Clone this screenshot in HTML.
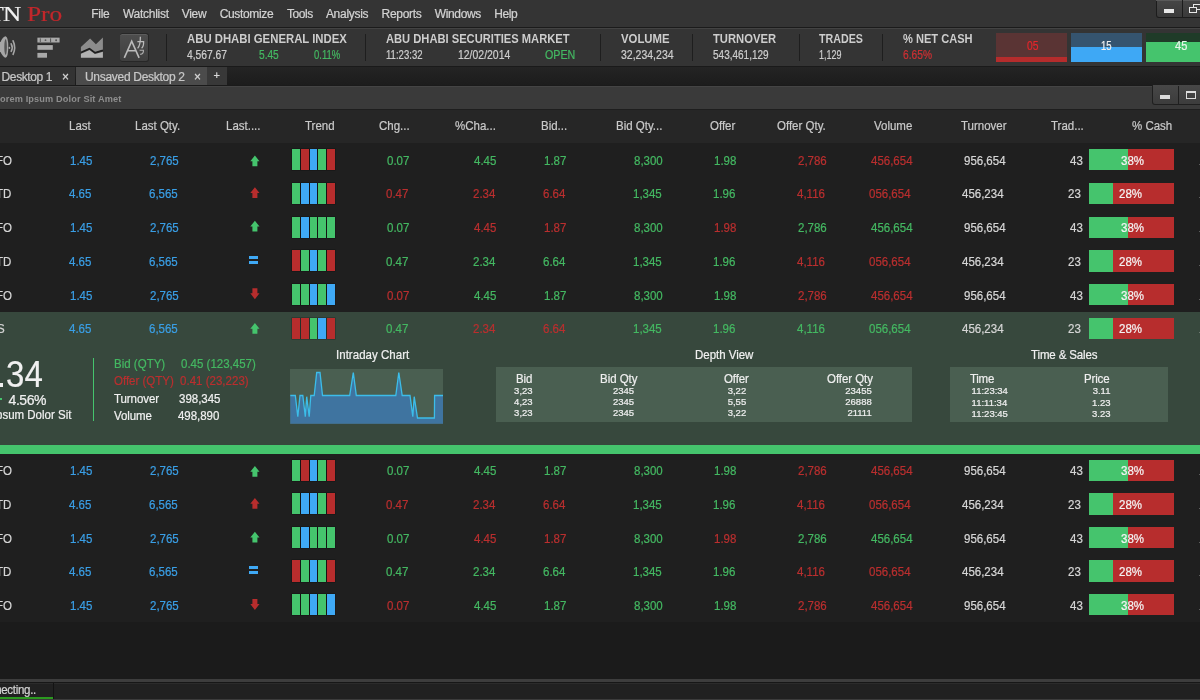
<!DOCTYPE html>
<html><head><meta charset="utf-8"><style>
*{margin:0;padding:0;box-sizing:border-box}
html,body{width:1200px;height:700px;overflow:hidden;background:#1b1b1b;position:relative}
.a{position:absolute}
.t{position:absolute;white-space:nowrap;-webkit-text-stroke:0.22px currentColor}
</style></head><body>
<div id="root" style="position:absolute;left:0;top:0;width:1200px;height:700px;overflow:hidden;background:#1b1b1b;will-change:transform">
<div class="a" style="left:0.00px;top:0.00px;width:1200.00px;height:27.00px;background:#343434;"></div>
<div class="a" style="left:0.00px;top:27.00px;width:1200.00px;height:1.00px;background:#1b1b1b;"></div>
<div class="a" style="left:0.00px;top:28.00px;width:1200.00px;height:1.00px;background:#434343;"></div>
<div class="a" style="left:0.00px;top:29.00px;width:1200.00px;height:37.00px;background:#343434;"></div>
<div class="a" style="left:0.00px;top:66.00px;width:1200.00px;height:1.00px;background:#1a1a1a;"></div>
<div class="t" style="left:-9.80px;top:-0.92px;font-size:22px;line-height:29px;letter-spacing:0.000px;color:#f0f0f0;font-family:'Liberation Serif',serif;">T</div>
<div class="t" style="left:3.40px;top:-0.92px;font-size:22px;line-height:29px;letter-spacing:0.000px;color:#f0f0f0;font-family:'Liberation Serif',serif;transform-origin:0 0;transform:scaleX(1.1447);">N</div>
<div class="t" style="left:26.70px;top:-0.92px;font-size:22px;line-height:29px;letter-spacing:0.000px;color:#c0272b;font-family:'Liberation Serif',serif;transform-origin:0 0;transform:scaleX(1.1536);">Pro</div>
<div class="t" style="left:91.30px;top:5.84px;font-size:12px;line-height:16px;letter-spacing:-0.300px;color:#d2d2d2;font-family:'Liberation Sans',sans-serif;">File</div>
<div class="t" style="left:123.00px;top:5.84px;font-size:12px;line-height:16px;letter-spacing:-0.275px;color:#d2d2d2;font-family:'Liberation Sans',sans-serif;">Watchlist</div>
<div class="t" style="left:181.70px;top:5.84px;font-size:12px;line-height:16px;letter-spacing:-0.267px;color:#d2d2d2;font-family:'Liberation Sans',sans-serif;">View</div>
<div class="t" style="left:219.70px;top:5.84px;font-size:12px;line-height:16px;letter-spacing:-0.338px;color:#d2d2d2;font-family:'Liberation Sans',sans-serif;">Customize</div>
<div class="t" style="left:286.90px;top:5.84px;font-size:12px;line-height:16px;letter-spacing:-0.400px;color:#d2d2d2;font-family:'Liberation Sans',sans-serif;">Tools</div>
<div class="t" style="left:325.90px;top:5.84px;font-size:12px;line-height:16px;letter-spacing:-0.286px;color:#d2d2d2;font-family:'Liberation Sans',sans-serif;">Analysis</div>
<div class="t" style="left:381.60px;top:5.84px;font-size:12px;line-height:16px;letter-spacing:-0.317px;color:#d2d2d2;font-family:'Liberation Sans',sans-serif;">Reports</div>
<div class="t" style="left:434.70px;top:5.84px;font-size:12px;line-height:16px;letter-spacing:-0.350px;color:#d2d2d2;font-family:'Liberation Sans',sans-serif;">Windows</div>
<div class="t" style="left:494.30px;top:5.84px;font-size:12px;line-height:16px;letter-spacing:-0.433px;color:#d2d2d2;font-family:'Liberation Sans',sans-serif;">Help</div>
<div class="a" style="left:1155.5px;top:-1px;width:50px;height:19px;border:1px solid #1c1c1c;border-top:none;border-radius:0 0 0 3px;background:linear-gradient(#474747,#3a3a3a)"></div>
<div class="a" style="left:1155.50px;top:0.00px;width:50.00px;height:1.00px;background:#5a5a5a;"></div>
<div class="a" style="left:1182.00px;top:0.00px;width:1.00px;height:17.50px;background:#1c1c1c;"></div>
<div class="a" style="left:1164.30px;top:9.30px;width:9.70px;height:3.40px;background:#e8e8e8;"></div>
<div class="a" style="left:1192.7px;top:3.8px;width:9px;height:6.5px;border:1.6px solid #e8e8e8"></div>
<div class="a" style="left:1189.3px;top:6.8px;width:7.9px;height:6.6px;border:1.6px solid #e8e8e8;background:#3f3f3f"></div>
<svg class="a" style="left:0;top:32px" width="20" height="30" viewBox="0 32 20 30">
<path d="M-4 42 L0.5 42 Q3 36.6 5.6 36.3 Q8.3 37 8.3 47 Q8.3 57 5.6 57.7 Q3 57.3 0.5 52 L-4 52 Z" fill="#a6a6a6"/>
<path d="M5.6 39 Q6.9 40.5 6.9 47 Q6.9 53.5 5.6 55 Q4.3 53.5 4.3 47 Q4.3 40.5 5.6 39Z" fill="#3a3a3a" opacity="0.75"/>
<ellipse cx="9.4" cy="47.9" rx="0.9" ry="1.1" fill="#a6a6a6"/>
<path d="M11.2 43.8 Q13.2 47.5 11.2 51.3" stroke="#a6a6a6" stroke-width="1.6" fill="none" stroke-linecap="round"/>
<path d="M13.1 40.8 Q16.2 47.5 13.1 54.3" stroke="#a6a6a6" stroke-width="1.6" fill="none" stroke-linecap="round"/>
</svg>
<svg class="a" style="left:36px;top:36px" width="26" height="23" viewBox="36 36 26 23">
<rect x="37.4" y="36.7" width="22.2" height="1" fill="#242424"/>
<rect x="37.4" y="37.6" width="22.2" height="4.9" fill="#a9a9a9"/>
<rect x="39.8" y="38.4" width="1" height="3.6" fill="#5a5a5a"/><circle cx="45.5" cy="40.2" r="0.9" fill="#5a5a5a"/>
<rect x="50" y="38.4" width="1.1" height="4.2" fill="#5a5a5a"/><circle cx="56.1" cy="40.2" r="1" fill="#555"/>
<rect x="37.4" y="44.2" width="15.4" height="1" fill="#242424"/>
<rect x="37.4" y="45.1" width="15.4" height="4.7" fill="#a9a9a9"/>
<rect x="37.4" y="51.9" width="9.6" height="1" fill="#242424"/>
<rect x="37.4" y="52.8" width="9.6" height="4.9" fill="#a9a9a9"/>
</svg>
<svg class="a" style="left:78px;top:35px" width="28" height="25" viewBox="78 35 28 25">
<path d="M80.9 47 L90.1 38.4 L95.9 44.2 L102.9 37.6 L102.9 50 L94.9 52.4 L89.5 48.3 L80.9 52.2 Z" fill="#8c8c8c"/>
<path d="M80.9 52.4 L89.5 48.5 L94.9 52.6 L102.9 50.2" stroke="#1e1e1e" stroke-width="1.5" fill="none"/>
<path d="M80.9 53.8 L89.5 50 L94.9 54 L102.9 51.7 L102.9 57.7 L80.9 57.7 Z" fill="#b2b2b2"/>
</svg>
<div class="a" style="left:119.5px;top:33px;width:29px;height:29px;border-radius:3px;background:#272727"></div>
<div class="a" style="left:120.2px;top:33.7px;width:27.7px;height:27.7px;border-radius:2.5px;background:linear-gradient(#4d4d4d,#3f3f3f);border-top:1px solid #5c5c5c"></div>
<svg class="a" style="left:116px;top:30px" width="36" height="36" viewBox="116 30 36 36">
<path d="M124.3 57.8 L131.7 41.2 L139.1 57.8 M127.3 50.8 L136.1 50.8" stroke="#bababa" stroke-width="1.6" fill="none"/>
<path d="M137.4 41.6 L143.6 41.6 Q143.8 46.5 141.6 48.2 M140.4 36.8 Q140.4 45.5 137.6 48.4" stroke="#bababa" stroke-width="1.3" fill="none"/>
<path d="M139.6 50.2 L143.4 50.2 Q143.8 53.8 140.2 54.4" stroke="#b0b0b0" stroke-width="1.1" fill="none"/>
</svg>
<div class="a" style="left:166.20px;top:34.20px;width:1.20px;height:26.80px;background:#1e1e1e;"></div>
<div class="a" style="left:365.10px;top:34.20px;width:1.20px;height:26.80px;background:#1e1e1e;"></div>
<div class="a" style="left:599.70px;top:34.20px;width:1.20px;height:26.80px;background:#1e1e1e;"></div>
<div class="a" style="left:692.20px;top:34.20px;width:1.20px;height:26.80px;background:#1e1e1e;"></div>
<div class="a" style="left:798.80px;top:34.20px;width:1.20px;height:26.80px;background:#1e1e1e;"></div>
<div class="a" style="left:882.20px;top:34.20px;width:1.20px;height:26.80px;background:#1e1e1e;"></div>
<div class="t" style="left:187.00px;top:30.87px;font-size:12.5px;line-height:16px;letter-spacing:0.000px;color:#cdcdcd;font-family:'Liberation Sans',sans-serif;font-weight:bold;-webkit-text-stroke:0;transform-origin:0 0;transform:scaleX(0.9075);">ABU DHABI GENERAL INDEX</div>
<div class="t" style="left:187.00px;top:46.84px;font-size:12px;line-height:16px;letter-spacing:0.000px;color:#cdcdcd;font-family:'Liberation Sans',sans-serif;transform-origin:0 0;transform:scaleX(0.8565);">4,567.67</div>
<div class="t" style="left:259.40px;top:46.84px;font-size:12px;line-height:16px;letter-spacing:0.000px;color:#44b862;font-family:'Liberation Sans',sans-serif;transform-origin:0 0;transform:scaleX(0.8462);">5.45</div>
<div class="t" style="left:314.00px;top:46.84px;font-size:12px;line-height:16px;letter-spacing:0.000px;color:#44b862;font-family:'Liberation Sans',sans-serif;transform-origin:0 0;transform:scaleX(0.7915);">0.11%</div>
<div class="t" style="left:386.00px;top:30.87px;font-size:12.5px;line-height:16px;letter-spacing:0.000px;color:#cdcdcd;font-family:'Liberation Sans',sans-serif;font-weight:bold;-webkit-text-stroke:0;transform-origin:0 0;transform:scaleX(0.8930);">ABU DHABI SECURITIES MARKET</div>
<div class="t" style="left:386.00px;top:46.84px;font-size:12px;line-height:16px;letter-spacing:0.000px;color:#cdcdcd;font-family:'Liberation Sans',sans-serif;transform-origin:0 0;transform:scaleX(0.7969);">11:23:32</div>
<div class="t" style="left:457.90px;top:46.84px;font-size:12px;line-height:16px;letter-spacing:0.000px;color:#cdcdcd;font-family:'Liberation Sans',sans-serif;transform-origin:0 0;transform:scaleX(0.8702);">12/02/2014</div>
<div class="t" style="left:545.00px;top:46.84px;font-size:12px;line-height:16px;letter-spacing:0.000px;color:#44b862;font-family:'Liberation Sans',sans-serif;transform-origin:0 0;transform:scaleX(0.8882);">OPEN</div>
<div class="t" style="left:620.70px;top:30.87px;font-size:12.5px;line-height:16px;letter-spacing:0.000px;color:#cdcdcd;font-family:'Liberation Sans',sans-serif;font-weight:bold;-webkit-text-stroke:0;transform-origin:0 0;transform:scaleX(0.9084);">VOLUME</div>
<div class="t" style="left:620.70px;top:46.84px;font-size:12px;line-height:16px;letter-spacing:0.000px;color:#cdcdcd;font-family:'Liberation Sans',sans-serif;transform-origin:0 0;transform:scaleX(0.8752);">32,234,234</div>
<div class="t" style="left:712.70px;top:30.87px;font-size:12.5px;line-height:16px;letter-spacing:0.000px;color:#cdcdcd;font-family:'Liberation Sans',sans-serif;font-weight:bold;-webkit-text-stroke:0;transform-origin:0 0;transform:scaleX(0.8987);">TURNOVER</div>
<div class="t" style="left:712.70px;top:46.84px;font-size:12px;line-height:16px;letter-spacing:0.000px;color:#cdcdcd;font-family:'Liberation Sans',sans-serif;transform-origin:0 0;transform:scaleX(0.8336);">543,461,129</div>
<div class="t" style="left:819.30px;top:30.87px;font-size:12.5px;line-height:16px;letter-spacing:0.000px;color:#cdcdcd;font-family:'Liberation Sans',sans-serif;font-weight:bold;-webkit-text-stroke:0;transform-origin:0 0;transform:scaleX(0.8560);">TRADES</div>
<div class="t" style="left:819.30px;top:46.84px;font-size:12px;line-height:16px;letter-spacing:0.000px;color:#cdcdcd;font-family:'Liberation Sans',sans-serif;transform-origin:0 0;transform:scaleX(0.7467);">1,129</div>
<div class="t" style="left:902.70px;top:30.87px;font-size:12.5px;line-height:16px;letter-spacing:0.000px;color:#cdcdcd;font-family:'Liberation Sans',sans-serif;font-weight:bold;-webkit-text-stroke:0;transform-origin:0 0;transform:scaleX(0.8866);">% NET CASH</div>
<div class="t" style="left:902.70px;top:46.84px;font-size:12px;line-height:16px;letter-spacing:0.000px;color:#cc3033;font-family:'Liberation Sans',sans-serif;transform-origin:0 0;transform:scaleX(0.8529);">6.65%</div>
<div class="a" style="left:996.00px;top:32.70px;width:71.20px;height:23.90px;background:#5a3434;"></div>
<div class="a" style="left:996.00px;top:56.60px;width:71.20px;height:5.60px;background:#b52c2c;"></div>
<div class="a" style="left:1071.20px;top:32.70px;width:71.20px;height:14.30px;background:#35546f;"></div>
<div class="a" style="left:1071.20px;top:47.00px;width:71.20px;height:15.20px;background:#3ea8f5;"></div>
<div class="a" style="left:1146.00px;top:32.70px;width:60.00px;height:9.40px;background:#1f3b28;"></div>
<div class="a" style="left:1146.00px;top:42.10px;width:60.00px;height:20.10px;background:#45c46d;"></div>
<div class="t" style="left:1026.80px;top:38.37px;font-size:12.5px;line-height:16px;letter-spacing:0.000px;color:#e3262b;font-family:'Liberation Sans',sans-serif;transform-origin:0 0;transform:scaleX(0.8273);">05</div>
<div class="t" style="left:1101.00px;top:38.37px;font-size:12.5px;line-height:16px;letter-spacing:0.000px;color:#f0f0f0;font-family:'Liberation Sans',sans-serif;transform-origin:0 0;transform:scaleX(0.7626);">15</div>
<div class="t" style="left:1175.40px;top:38.37px;font-size:12.5px;line-height:16px;letter-spacing:0.000px;color:#e8f5ea;font-family:'Liberation Sans',sans-serif;transform-origin:0 0;transform:scaleX(0.8849);">45</div>
<div class="a" style="left:0.00px;top:67.00px;width:1200.00px;height:18.00px;background:linear-gradient(#242424,#1c1c1c);"></div>
<div class="a" style="left:0.00px;top:67.00px;width:75.00px;height:18.00px;background:#333333;"></div>
<div class="a" style="left:76.00px;top:67.00px;width:130.60px;height:18.00px;background:#4b4b4b;"></div>
<div class="a" style="left:207.00px;top:67.00px;width:20.00px;height:18.00px;background:#383838;"></div>
<div class="t" style="left:1.60px;top:68.54px;font-size:12px;line-height:16px;letter-spacing:-0.400px;color:#c8c8c8;font-family:'Liberation Sans',sans-serif;">Desktop 1</div>
<div class="t" style="left:85.00px;top:68.54px;font-size:12px;line-height:16px;letter-spacing:-0.294px;color:#c8c8c8;font-family:'Liberation Sans',sans-serif;">Unsaved Desktop 2</div>
<div class="t" style="left:62.00px;top:69.34px;font-size:12px;line-height:16px;letter-spacing:0.000px;color:#d8d8d8;font-family:'Liberation Sans',sans-serif;">×</div>
<div class="t" style="left:194.00px;top:69.34px;font-size:12px;line-height:16px;letter-spacing:0.000px;color:#d8d8d8;font-family:'Liberation Sans',sans-serif;">×</div>
<div class="t" style="left:213.60px;top:68.19px;font-size:11px;line-height:14px;letter-spacing:0.000px;color:#d8d8d8;font-family:'Liberation Sans',sans-serif;">+</div>
<div class="a" style="left:0.00px;top:85.00px;width:1200.00px;height:1.00px;background:#1a1a1a;"></div>
<div class="a" style="left:0.00px;top:86.00px;width:1200.00px;height:22.80px;background:#3a3a3a;"></div>
<div class="a" style="left:0.00px;top:86.00px;width:1200.00px;height:1.00px;background:#444444;"></div>
<div class="t" style="left:0.00px;top:92.81px;font-size:9.2px;line-height:12px;letter-spacing:0.133px;color:#8e8e8e;font-family:'Liberation Sans',sans-serif;font-weight:bold;-webkit-text-stroke:0;">orem Ipsum Dolor Sit Amet</div>
<div class="a" style="left:1151.7px;top:85px;width:60px;height:20.3px;border:1px solid #1f1f1f;border-top:none;border-radius:0 0 0 3px;background:linear-gradient(#474747,#3c3c3c)"></div>
<div class="a" style="left:1178.00px;top:86.00px;width:1.20px;height:18.00px;background:#1f1f1f;"></div>
<div class="a" style="left:1160.30px;top:95.30px;width:9.70px;height:3.70px;background:#dcdcdc;"></div>
<div class="a" style="left:1186px;top:91px;width:10px;height:8px;border:1.6px solid #dcdcdc;border-top-width:2.4px"></div>
<div class="a" style="left:0.00px;top:108.80px;width:1200.00px;height:1.40px;background:#1e1e1e;"></div>
<div class="a" style="left:0.00px;top:110.00px;width:1200.00px;height:33.00px;background:#262626;"></div>
<div class="t" style="left:68.80px;top:117.63px;font-size:12.6px;line-height:16px;letter-spacing:0.000px;color:#c9c9c9;font-family:'Liberation Sans',sans-serif;transform-origin:0 0;transform:scaleX(0.9127);">Last</div>
<div class="t" style="left:134.80px;top:117.63px;font-size:12.6px;line-height:16px;letter-spacing:0.000px;color:#c9c9c9;font-family:'Liberation Sans',sans-serif;transform-origin:0 0;transform:scaleX(0.9127);">Last Qty.</div>
<div class="t" style="left:225.50px;top:117.63px;font-size:12.6px;line-height:16px;letter-spacing:0.000px;color:#c9c9c9;font-family:'Liberation Sans',sans-serif;transform-origin:0 0;transform:scaleX(0.9127);">Last....</div>
<div class="t" style="left:304.65px;top:117.63px;font-size:12.6px;line-height:16px;letter-spacing:0.000px;color:#c9c9c9;font-family:'Liberation Sans',sans-serif;transform-origin:0 0;transform:scaleX(0.9127);">Trend</div>
<div class="t" style="left:379.30px;top:117.63px;font-size:12.6px;line-height:16px;letter-spacing:0.000px;color:#c9c9c9;font-family:'Liberation Sans',sans-serif;transform-origin:0 0;transform:scaleX(0.9127);">Chg...</div>
<div class="t" style="left:454.85px;top:117.63px;font-size:12.6px;line-height:16px;letter-spacing:0.000px;color:#c9c9c9;font-family:'Liberation Sans',sans-serif;transform-origin:0 0;transform:scaleX(0.9127);">%Cha...</div>
<div class="t" style="left:540.80px;top:117.63px;font-size:12.6px;line-height:16px;letter-spacing:0.000px;color:#c9c9c9;font-family:'Liberation Sans',sans-serif;transform-origin:0 0;transform:scaleX(0.9127);">Bid...</div>
<div class="t" style="left:615.60px;top:117.63px;font-size:12.6px;line-height:16px;letter-spacing:0.000px;color:#c9c9c9;font-family:'Liberation Sans',sans-serif;transform-origin:0 0;transform:scaleX(0.9127);">Bid Qty...</div>
<div class="t" style="left:710.10px;top:117.63px;font-size:12.6px;line-height:16px;letter-spacing:0.000px;color:#c9c9c9;font-family:'Liberation Sans',sans-serif;transform-origin:0 0;transform:scaleX(0.9127);">Offer</div>
<div class="t" style="left:776.95px;top:117.63px;font-size:12.6px;line-height:16px;letter-spacing:0.000px;color:#c9c9c9;font-family:'Liberation Sans',sans-serif;transform-origin:0 0;transform:scaleX(0.9127);">Offer Qty.</div>
<div class="t" style="left:874.10px;top:117.63px;font-size:12.6px;line-height:16px;letter-spacing:0.000px;color:#c9c9c9;font-family:'Liberation Sans',sans-serif;transform-origin:0 0;transform:scaleX(0.9127);">Volume</div>
<div class="t" style="left:961.15px;top:117.63px;font-size:12.6px;line-height:16px;letter-spacing:0.000px;color:#c9c9c9;font-family:'Liberation Sans',sans-serif;transform-origin:0 0;transform:scaleX(0.9127);">Turnover</div>
<div class="t" style="left:1050.95px;top:117.63px;font-size:12.6px;line-height:16px;letter-spacing:0.000px;color:#c9c9c9;font-family:'Liberation Sans',sans-serif;transform-origin:0 0;transform:scaleX(0.9127);">Trad...</div>
<div class="t" style="left:1131.70px;top:117.63px;font-size:12.6px;line-height:16px;letter-spacing:0.000px;color:#c9c9c9;font-family:'Liberation Sans',sans-serif;transform-origin:0 0;transform:scaleX(0.9127);">% Cash</div>
<div class="a" style="left:0.00px;top:143.00px;width:1200.00px;height:168.75px;background:#1f1f1f;"></div>
<div class="t" style="left:-3.80px;top:152.73px;font-size:12.6px;line-height:16px;letter-spacing:0.000px;color:#d6d6d6;font-family:'Liberation Sans',sans-serif;transform-origin:0 0;transform:scaleX(0.9127);">FO</div>
<div class="t" style="left:69.85px;top:152.73px;font-size:12.6px;line-height:16px;letter-spacing:0.000px;color:#3a9fe6;font-family:'Liberation Sans',sans-serif;transform-origin:0 0;transform:scaleX(0.9127);">1.45</div>
<div class="t" style="left:149.70px;top:152.73px;font-size:12.6px;line-height:16px;letter-spacing:0.000px;color:#3a9fe6;font-family:'Liberation Sans',sans-serif;transform-origin:0 0;transform:scaleX(0.9127);">2,765</div>
<svg class="a" style="left:0;top:0;overflow:visible" width="1" height="1"><path d="M254.9 155.5 L259.5 161.3 L257.4 161.3 L257.4 166.3 L252.4 166.3 L252.4 161.3 L250.3 161.3 Z" fill="#45c46d"/></svg>
<div class="a" style="left:292.00px;top:149.00px;width:8.00px;height:21.20px;background:#45c46d;box-shadow:0 0 0 0.5px rgba(0,0,0,0.35)"></div>
<div class="a" style="left:301.00px;top:149.00px;width:7.75px;height:21.20px;background:#b72d2d;box-shadow:0 0 0 0.5px rgba(0,0,0,0.35)"></div>
<div class="a" style="left:309.75px;top:149.00px;width:7.25px;height:21.20px;background:#3fa9f5;box-shadow:0 0 0 0.5px rgba(0,0,0,0.35)"></div>
<div class="a" style="left:318.00px;top:149.00px;width:8.00px;height:21.20px;background:#45c46d;box-shadow:0 0 0 0.5px rgba(0,0,0,0.35)"></div>
<div class="a" style="left:327.00px;top:149.00px;width:7.75px;height:21.20px;background:#b72d2d;box-shadow:0 0 0 0.5px rgba(0,0,0,0.35)"></div>
<div class="t" style="left:387.10px;top:152.73px;font-size:12.6px;line-height:16px;letter-spacing:0.000px;color:#44b862;font-family:'Liberation Sans',sans-serif;transform-origin:0 0;transform:scaleX(0.9127);">0.07</div>
<div class="t" style="left:473.85px;top:152.73px;font-size:12.6px;line-height:16px;letter-spacing:0.000px;color:#44b862;font-family:'Liberation Sans',sans-serif;transform-origin:0 0;transform:scaleX(0.9127);">4.45</div>
<div class="t" style="left:544.10px;top:152.73px;font-size:12.6px;line-height:16px;letter-spacing:0.000px;color:#44b862;font-family:'Liberation Sans',sans-serif;transform-origin:0 0;transform:scaleX(0.9127);">1.87</div>
<div class="t" style="left:633.95px;top:152.73px;font-size:12.6px;line-height:16px;letter-spacing:0.000px;color:#44b862;font-family:'Liberation Sans',sans-serif;transform-origin:0 0;transform:scaleX(0.9127);">8,300</div>
<div class="t" style="left:714.10px;top:152.73px;font-size:12.6px;line-height:16px;letter-spacing:0.000px;color:#44b862;font-family:'Liberation Sans',sans-serif;transform-origin:0 0;transform:scaleX(0.9127);">1.98</div>
<div class="t" style="left:797.70px;top:152.73px;font-size:12.6px;line-height:16px;letter-spacing:0.000px;color:#ba2f2f;font-family:'Liberation Sans',sans-serif;transform-origin:0 0;transform:scaleX(0.9127);">2,786</div>
<div class="t" style="left:871.15px;top:152.73px;font-size:12.6px;line-height:16px;letter-spacing:0.000px;color:#ba2f2f;font-family:'Liberation Sans',sans-serif;transform-origin:0 0;transform:scaleX(0.9127);">456,654</div>
<div class="t" style="left:963.90px;top:152.73px;font-size:12.6px;line-height:16px;letter-spacing:0.000px;color:#d6d6d6;font-family:'Liberation Sans',sans-serif;transform-origin:0 0;transform:scaleX(0.9127);">956,654</div>
<div class="t" style="left:1069.70px;top:152.73px;font-size:12.6px;line-height:16px;letter-spacing:0.000px;color:#d6d6d6;font-family:'Liberation Sans',sans-serif;transform-origin:0 0;transform:scaleX(0.9127);">43</div>
<div class="a" style="left:1089.25px;top:149.00px;width:38.75px;height:21.30px;background:#45c46d;"></div>
<div class="a" style="left:1128.00px;top:149.00px;width:46.25px;height:21.30px;background:#b72d2d;"></div>
<div class="t" style="left:1121.25px;top:152.73px;font-size:12.6px;line-height:16px;letter-spacing:0.000px;color:#f4f4f4;font-family:'Liberation Sans',sans-serif;transform-origin:0 0;transform:scaleX(0.9127);">38%</div>
<div class="t" style="left:1198.50px;top:152.73px;font-size:12.6px;line-height:16px;letter-spacing:0.000px;color:#cfcfcf;font-family:'Liberation Sans',sans-serif;transform-origin:0 0;transform:scaleX(0.9127);">1</div>
<div class="t" style="left:-4.40px;top:186.48px;font-size:12.6px;line-height:16px;letter-spacing:0.000px;color:#d6d6d6;font-family:'Liberation Sans',sans-serif;transform-origin:0 0;transform:scaleX(0.9127);">TD</div>
<div class="t" style="left:69.35px;top:186.48px;font-size:12.6px;line-height:16px;letter-spacing:0.000px;color:#3a9fe6;font-family:'Liberation Sans',sans-serif;transform-origin:0 0;transform:scaleX(0.9127);">4.65</div>
<div class="t" style="left:149.20px;top:186.48px;font-size:12.6px;line-height:16px;letter-spacing:0.000px;color:#3a9fe6;font-family:'Liberation Sans',sans-serif;transform-origin:0 0;transform:scaleX(0.9127);">6,565</div>
<svg class="a" style="left:0;top:0;overflow:visible" width="1" height="1"><path d="M254.9 187.25 L259.5 193.05 L257.4 193.05 L257.4 198.05 L252.4 198.05 L252.4 193.05 L250.3 193.05 Z" fill="#b72d2d"/></svg>
<div class="a" style="left:292.00px;top:182.75px;width:8.00px;height:21.20px;background:#45c46d;box-shadow:0 0 0 0.5px rgba(0,0,0,0.35)"></div>
<div class="a" style="left:301.00px;top:182.75px;width:7.75px;height:21.20px;background:#3fa9f5;box-shadow:0 0 0 0.5px rgba(0,0,0,0.35)"></div>
<div class="a" style="left:309.75px;top:182.75px;width:7.25px;height:21.20px;background:#3fa9f5;box-shadow:0 0 0 0.5px rgba(0,0,0,0.35)"></div>
<div class="a" style="left:318.00px;top:182.75px;width:8.00px;height:21.20px;background:#45c46d;box-shadow:0 0 0 0.5px rgba(0,0,0,0.35)"></div>
<div class="a" style="left:327.00px;top:182.75px;width:7.75px;height:21.20px;background:#b72d2d;box-shadow:0 0 0 0.5px rgba(0,0,0,0.35)"></div>
<div class="t" style="left:386.35px;top:186.48px;font-size:12.6px;line-height:16px;letter-spacing:0.000px;color:#ba2f2f;font-family:'Liberation Sans',sans-serif;transform-origin:0 0;transform:scaleX(0.9127);">0.47</div>
<div class="t" style="left:473.10px;top:186.48px;font-size:12.6px;line-height:16px;letter-spacing:0.000px;color:#ba2f2f;font-family:'Liberation Sans',sans-serif;transform-origin:0 0;transform:scaleX(0.9127);">2.34</div>
<div class="t" style="left:543.35px;top:186.48px;font-size:12.6px;line-height:16px;letter-spacing:0.000px;color:#ba2f2f;font-family:'Liberation Sans',sans-serif;transform-origin:0 0;transform:scaleX(0.9127);">6.64</div>
<div class="t" style="left:633.20px;top:186.48px;font-size:12.6px;line-height:16px;letter-spacing:0.000px;color:#44b862;font-family:'Liberation Sans',sans-serif;transform-origin:0 0;transform:scaleX(0.9127);">1,345</div>
<div class="t" style="left:713.35px;top:186.48px;font-size:12.6px;line-height:16px;letter-spacing:0.000px;color:#44b862;font-family:'Liberation Sans',sans-serif;transform-origin:0 0;transform:scaleX(0.9127);">1.96</div>
<div class="t" style="left:796.85px;top:186.48px;font-size:12.6px;line-height:16px;letter-spacing:0.000px;color:#ba2f2f;font-family:'Liberation Sans',sans-serif;transform-origin:0 0;transform:scaleX(0.9127);">4,116</div>
<div class="t" style="left:869.40px;top:186.48px;font-size:12.6px;line-height:16px;letter-spacing:0.000px;color:#ba2f2f;font-family:'Liberation Sans',sans-serif;transform-origin:0 0;transform:scaleX(0.9127);">056,654</div>
<div class="t" style="left:962.40px;top:186.48px;font-size:12.6px;line-height:16px;letter-spacing:0.000px;color:#d6d6d6;font-family:'Liberation Sans',sans-serif;transform-origin:0 0;transform:scaleX(0.9127);">456,234</div>
<div class="t" style="left:1067.70px;top:186.48px;font-size:12.6px;line-height:16px;letter-spacing:0.000px;color:#d6d6d6;font-family:'Liberation Sans',sans-serif;transform-origin:0 0;transform:scaleX(0.9127);">23</div>
<div class="a" style="left:1089.25px;top:182.75px;width:23.25px;height:21.30px;background:#45c46d;"></div>
<div class="a" style="left:1112.50px;top:182.75px;width:61.75px;height:21.30px;background:#b72d2d;"></div>
<div class="t" style="left:1118.50px;top:186.48px;font-size:12.6px;line-height:16px;letter-spacing:0.000px;color:#f4f4f4;font-family:'Liberation Sans',sans-serif;transform-origin:0 0;transform:scaleX(0.9127);">28%</div>
<div class="t" style="left:1198.50px;top:186.48px;font-size:12.6px;line-height:16px;letter-spacing:0.000px;color:#cfcfcf;font-family:'Liberation Sans',sans-serif;transform-origin:0 0;transform:scaleX(0.9127);">1</div>
<div class="t" style="left:-3.80px;top:220.23px;font-size:12.6px;line-height:16px;letter-spacing:0.000px;color:#d6d6d6;font-family:'Liberation Sans',sans-serif;transform-origin:0 0;transform:scaleX(0.9127);">FO</div>
<div class="t" style="left:69.85px;top:220.23px;font-size:12.6px;line-height:16px;letter-spacing:0.000px;color:#3a9fe6;font-family:'Liberation Sans',sans-serif;transform-origin:0 0;transform:scaleX(0.9127);">1.45</div>
<div class="t" style="left:149.70px;top:220.23px;font-size:12.6px;line-height:16px;letter-spacing:0.000px;color:#3a9fe6;font-family:'Liberation Sans',sans-serif;transform-origin:0 0;transform:scaleX(0.9127);">2,765</div>
<svg class="a" style="left:0;top:0;overflow:visible" width="1" height="1"><path d="M254.9 220.75 L259.5 226.55 L257.4 226.55 L257.4 231.55 L252.4 231.55 L252.4 226.55 L250.3 226.55 Z" fill="#45c46d"/></svg>
<div class="a" style="left:292.00px;top:216.50px;width:8.00px;height:21.20px;background:#45c46d;box-shadow:0 0 0 0.5px rgba(0,0,0,0.35)"></div>
<div class="a" style="left:301.00px;top:216.50px;width:7.75px;height:21.20px;background:#3fa9f5;box-shadow:0 0 0 0.5px rgba(0,0,0,0.35)"></div>
<div class="a" style="left:309.75px;top:216.50px;width:7.25px;height:21.20px;background:#45c46d;box-shadow:0 0 0 0.5px rgba(0,0,0,0.35)"></div>
<div class="a" style="left:318.00px;top:216.50px;width:8.00px;height:21.20px;background:#45c46d;box-shadow:0 0 0 0.5px rgba(0,0,0,0.35)"></div>
<div class="a" style="left:327.00px;top:216.50px;width:7.75px;height:21.20px;background:#45c46d;box-shadow:0 0 0 0.5px rgba(0,0,0,0.35)"></div>
<div class="t" style="left:387.10px;top:220.23px;font-size:12.6px;line-height:16px;letter-spacing:0.000px;color:#44b862;font-family:'Liberation Sans',sans-serif;transform-origin:0 0;transform:scaleX(0.9127);">0.07</div>
<div class="t" style="left:473.85px;top:220.23px;font-size:12.6px;line-height:16px;letter-spacing:0.000px;color:#ba2f2f;font-family:'Liberation Sans',sans-serif;transform-origin:0 0;transform:scaleX(0.9127);">4.45</div>
<div class="t" style="left:544.10px;top:220.23px;font-size:12.6px;line-height:16px;letter-spacing:0.000px;color:#ba2f2f;font-family:'Liberation Sans',sans-serif;transform-origin:0 0;transform:scaleX(0.9127);">1.87</div>
<div class="t" style="left:633.95px;top:220.23px;font-size:12.6px;line-height:16px;letter-spacing:0.000px;color:#44b862;font-family:'Liberation Sans',sans-serif;transform-origin:0 0;transform:scaleX(0.9127);">8,300</div>
<div class="t" style="left:714.10px;top:220.23px;font-size:12.6px;line-height:16px;letter-spacing:0.000px;color:#ba2f2f;font-family:'Liberation Sans',sans-serif;transform-origin:0 0;transform:scaleX(0.9127);">1.98</div>
<div class="t" style="left:797.70px;top:220.23px;font-size:12.6px;line-height:16px;letter-spacing:0.000px;color:#44b862;font-family:'Liberation Sans',sans-serif;transform-origin:0 0;transform:scaleX(0.9127);">2,786</div>
<div class="t" style="left:871.15px;top:220.23px;font-size:12.6px;line-height:16px;letter-spacing:0.000px;color:#44b862;font-family:'Liberation Sans',sans-serif;transform-origin:0 0;transform:scaleX(0.9127);">456,654</div>
<div class="t" style="left:963.90px;top:220.23px;font-size:12.6px;line-height:16px;letter-spacing:0.000px;color:#d6d6d6;font-family:'Liberation Sans',sans-serif;transform-origin:0 0;transform:scaleX(0.9127);">956,654</div>
<div class="t" style="left:1069.70px;top:220.23px;font-size:12.6px;line-height:16px;letter-spacing:0.000px;color:#d6d6d6;font-family:'Liberation Sans',sans-serif;transform-origin:0 0;transform:scaleX(0.9127);">43</div>
<div class="a" style="left:1089.25px;top:216.50px;width:38.75px;height:21.30px;background:#45c46d;"></div>
<div class="a" style="left:1128.00px;top:216.50px;width:46.25px;height:21.30px;background:#b72d2d;"></div>
<div class="t" style="left:1121.25px;top:220.23px;font-size:12.6px;line-height:16px;letter-spacing:0.000px;color:#f4f4f4;font-family:'Liberation Sans',sans-serif;transform-origin:0 0;transform:scaleX(0.9127);">38%</div>
<div class="t" style="left:1198.50px;top:220.23px;font-size:12.6px;line-height:16px;letter-spacing:0.000px;color:#cfcfcf;font-family:'Liberation Sans',sans-serif;transform-origin:0 0;transform:scaleX(0.9127);">1</div>
<div class="t" style="left:-4.40px;top:253.98px;font-size:12.6px;line-height:16px;letter-spacing:0.000px;color:#d6d6d6;font-family:'Liberation Sans',sans-serif;transform-origin:0 0;transform:scaleX(0.9127);">TD</div>
<div class="t" style="left:69.35px;top:253.98px;font-size:12.6px;line-height:16px;letter-spacing:0.000px;color:#3a9fe6;font-family:'Liberation Sans',sans-serif;transform-origin:0 0;transform:scaleX(0.9127);">4.65</div>
<div class="t" style="left:149.20px;top:253.98px;font-size:12.6px;line-height:16px;letter-spacing:0.000px;color:#3a9fe6;font-family:'Liberation Sans',sans-serif;transform-origin:0 0;transform:scaleX(0.9127);">6,565</div>
<div class="a" style="left:249.00px;top:256.00px;width:8.75px;height:2.75px;background:#3fa9f5;"></div>
<div class="a" style="left:249.00px;top:260.75px;width:8.75px;height:2.75px;background:#3fa9f5;"></div>
<div class="a" style="left:292.00px;top:250.25px;width:8.00px;height:21.20px;background:#b72d2d;box-shadow:0 0 0 0.5px rgba(0,0,0,0.35)"></div>
<div class="a" style="left:301.00px;top:250.25px;width:7.75px;height:21.20px;background:#45c46d;box-shadow:0 0 0 0.5px rgba(0,0,0,0.35)"></div>
<div class="a" style="left:309.75px;top:250.25px;width:7.25px;height:21.20px;background:#3fa9f5;box-shadow:0 0 0 0.5px rgba(0,0,0,0.35)"></div>
<div class="a" style="left:318.00px;top:250.25px;width:8.00px;height:21.20px;background:#45c46d;box-shadow:0 0 0 0.5px rgba(0,0,0,0.35)"></div>
<div class="a" style="left:327.00px;top:250.25px;width:7.75px;height:21.20px;background:#b72d2d;box-shadow:0 0 0 0.5px rgba(0,0,0,0.35)"></div>
<div class="t" style="left:386.35px;top:253.98px;font-size:12.6px;line-height:16px;letter-spacing:0.000px;color:#44b862;font-family:'Liberation Sans',sans-serif;transform-origin:0 0;transform:scaleX(0.9127);">0.47</div>
<div class="t" style="left:473.10px;top:253.98px;font-size:12.6px;line-height:16px;letter-spacing:0.000px;color:#44b862;font-family:'Liberation Sans',sans-serif;transform-origin:0 0;transform:scaleX(0.9127);">2.34</div>
<div class="t" style="left:543.35px;top:253.98px;font-size:12.6px;line-height:16px;letter-spacing:0.000px;color:#44b862;font-family:'Liberation Sans',sans-serif;transform-origin:0 0;transform:scaleX(0.9127);">6.64</div>
<div class="t" style="left:633.20px;top:253.98px;font-size:12.6px;line-height:16px;letter-spacing:0.000px;color:#44b862;font-family:'Liberation Sans',sans-serif;transform-origin:0 0;transform:scaleX(0.9127);">1,345</div>
<div class="t" style="left:713.35px;top:253.98px;font-size:12.6px;line-height:16px;letter-spacing:0.000px;color:#44b862;font-family:'Liberation Sans',sans-serif;transform-origin:0 0;transform:scaleX(0.9127);">1.96</div>
<div class="t" style="left:796.85px;top:253.98px;font-size:12.6px;line-height:16px;letter-spacing:0.000px;color:#ba2f2f;font-family:'Liberation Sans',sans-serif;transform-origin:0 0;transform:scaleX(0.9127);">4,116</div>
<div class="t" style="left:869.40px;top:253.98px;font-size:12.6px;line-height:16px;letter-spacing:0.000px;color:#ba2f2f;font-family:'Liberation Sans',sans-serif;transform-origin:0 0;transform:scaleX(0.9127);">056,654</div>
<div class="t" style="left:962.40px;top:253.98px;font-size:12.6px;line-height:16px;letter-spacing:0.000px;color:#d6d6d6;font-family:'Liberation Sans',sans-serif;transform-origin:0 0;transform:scaleX(0.9127);">456,234</div>
<div class="t" style="left:1067.70px;top:253.98px;font-size:12.6px;line-height:16px;letter-spacing:0.000px;color:#d6d6d6;font-family:'Liberation Sans',sans-serif;transform-origin:0 0;transform:scaleX(0.9127);">23</div>
<div class="a" style="left:1089.25px;top:250.25px;width:23.25px;height:21.30px;background:#45c46d;"></div>
<div class="a" style="left:1112.50px;top:250.25px;width:61.75px;height:21.30px;background:#b72d2d;"></div>
<div class="t" style="left:1118.50px;top:253.98px;font-size:12.6px;line-height:16px;letter-spacing:0.000px;color:#f4f4f4;font-family:'Liberation Sans',sans-serif;transform-origin:0 0;transform:scaleX(0.9127);">28%</div>
<div class="t" style="left:1198.50px;top:253.98px;font-size:12.6px;line-height:16px;letter-spacing:0.000px;color:#cfcfcf;font-family:'Liberation Sans',sans-serif;transform-origin:0 0;transform:scaleX(0.9127);">1</div>
<div class="t" style="left:-3.80px;top:287.73px;font-size:12.6px;line-height:16px;letter-spacing:0.000px;color:#d6d6d6;font-family:'Liberation Sans',sans-serif;transform-origin:0 0;transform:scaleX(0.9127);">FO</div>
<div class="t" style="left:69.85px;top:287.73px;font-size:12.6px;line-height:16px;letter-spacing:0.000px;color:#3a9fe6;font-family:'Liberation Sans',sans-serif;transform-origin:0 0;transform:scaleX(0.9127);">1.45</div>
<div class="t" style="left:149.70px;top:287.73px;font-size:12.6px;line-height:16px;letter-spacing:0.000px;color:#3a9fe6;font-family:'Liberation Sans',sans-serif;transform-origin:0 0;transform:scaleX(0.9127);">2,765</div>
<svg class="a" style="left:0;top:0;overflow:visible" width="1" height="1"><path d="M254.9 299.15 L259.5 293.34999999999997 L257.4 293.34999999999997 L257.4 288.25 L252.4 288.25 L252.4 293.34999999999997 L250.3 293.34999999999997 Z" fill="#b72d2d"/></svg>
<div class="a" style="left:292.00px;top:284.00px;width:8.00px;height:21.20px;background:#45c46d;box-shadow:0 0 0 0.5px rgba(0,0,0,0.35)"></div>
<div class="a" style="left:301.00px;top:284.00px;width:7.75px;height:21.20px;background:#45c46d;box-shadow:0 0 0 0.5px rgba(0,0,0,0.35)"></div>
<div class="a" style="left:309.75px;top:284.00px;width:7.25px;height:21.20px;background:#3fa9f5;box-shadow:0 0 0 0.5px rgba(0,0,0,0.35)"></div>
<div class="a" style="left:318.00px;top:284.00px;width:8.00px;height:21.20px;background:#45c46d;box-shadow:0 0 0 0.5px rgba(0,0,0,0.35)"></div>
<div class="a" style="left:327.00px;top:284.00px;width:7.75px;height:21.20px;background:#3fa9f5;box-shadow:0 0 0 0.5px rgba(0,0,0,0.35)"></div>
<div class="t" style="left:387.10px;top:287.73px;font-size:12.6px;line-height:16px;letter-spacing:0.000px;color:#ba2f2f;font-family:'Liberation Sans',sans-serif;transform-origin:0 0;transform:scaleX(0.9127);">0.07</div>
<div class="t" style="left:473.85px;top:287.73px;font-size:12.6px;line-height:16px;letter-spacing:0.000px;color:#44b862;font-family:'Liberation Sans',sans-serif;transform-origin:0 0;transform:scaleX(0.9127);">4.45</div>
<div class="t" style="left:544.10px;top:287.73px;font-size:12.6px;line-height:16px;letter-spacing:0.000px;color:#44b862;font-family:'Liberation Sans',sans-serif;transform-origin:0 0;transform:scaleX(0.9127);">1.87</div>
<div class="t" style="left:633.95px;top:287.73px;font-size:12.6px;line-height:16px;letter-spacing:0.000px;color:#44b862;font-family:'Liberation Sans',sans-serif;transform-origin:0 0;transform:scaleX(0.9127);">8,300</div>
<div class="t" style="left:714.10px;top:287.73px;font-size:12.6px;line-height:16px;letter-spacing:0.000px;color:#44b862;font-family:'Liberation Sans',sans-serif;transform-origin:0 0;transform:scaleX(0.9127);">1.98</div>
<div class="t" style="left:797.70px;top:287.73px;font-size:12.6px;line-height:16px;letter-spacing:0.000px;color:#ba2f2f;font-family:'Liberation Sans',sans-serif;transform-origin:0 0;transform:scaleX(0.9127);">2,786</div>
<div class="t" style="left:871.15px;top:287.73px;font-size:12.6px;line-height:16px;letter-spacing:0.000px;color:#ba2f2f;font-family:'Liberation Sans',sans-serif;transform-origin:0 0;transform:scaleX(0.9127);">456,654</div>
<div class="t" style="left:963.90px;top:287.73px;font-size:12.6px;line-height:16px;letter-spacing:0.000px;color:#d6d6d6;font-family:'Liberation Sans',sans-serif;transform-origin:0 0;transform:scaleX(0.9127);">956,654</div>
<div class="t" style="left:1069.70px;top:287.73px;font-size:12.6px;line-height:16px;letter-spacing:0.000px;color:#d6d6d6;font-family:'Liberation Sans',sans-serif;transform-origin:0 0;transform:scaleX(0.9127);">43</div>
<div class="a" style="left:1089.25px;top:284.00px;width:38.75px;height:21.30px;background:#45c46d;"></div>
<div class="a" style="left:1128.00px;top:284.00px;width:46.25px;height:21.30px;background:#b72d2d;"></div>
<div class="t" style="left:1121.25px;top:287.73px;font-size:12.6px;line-height:16px;letter-spacing:0.000px;color:#f4f4f4;font-family:'Liberation Sans',sans-serif;transform-origin:0 0;transform:scaleX(0.9127);">38%</div>
<div class="t" style="left:1198.50px;top:287.73px;font-size:12.6px;line-height:16px;letter-spacing:0.000px;color:#cfcfcf;font-family:'Liberation Sans',sans-serif;transform-origin:0 0;transform:scaleX(0.9127);">1</div>
<div class="a" style="left:0.00px;top:311.75px;width:1200.00px;height:133.25px;background:#37483d;"></div>
<div class="t" style="left:-3.10px;top:321.48px;font-size:12.6px;line-height:16px;letter-spacing:0.000px;color:#d6d6d6;font-family:'Liberation Sans',sans-serif;transform-origin:0 0;transform:scaleX(0.9127);">S</div>
<div class="t" style="left:69.35px;top:321.48px;font-size:12.6px;line-height:16px;letter-spacing:0.000px;color:#3a9fe6;font-family:'Liberation Sans',sans-serif;transform-origin:0 0;transform:scaleX(0.9127);">4.65</div>
<div class="t" style="left:149.20px;top:321.48px;font-size:12.6px;line-height:16px;letter-spacing:0.000px;color:#3a9fe6;font-family:'Liberation Sans',sans-serif;transform-origin:0 0;transform:scaleX(0.9127);">6,565</div>
<svg class="a" style="left:0;top:0;overflow:visible" width="1" height="1"><path d="M254.9 323 L259.5 328.8 L257.4 328.8 L257.4 333.8 L252.4 333.8 L252.4 328.8 L250.3 328.8 Z" fill="#45c46d"/></svg>
<div class="a" style="left:292.00px;top:317.75px;width:8.00px;height:21.20px;background:#b72d2d;box-shadow:0 0 0 0.5px rgba(0,0,0,0.35)"></div>
<div class="a" style="left:301.00px;top:317.75px;width:7.75px;height:21.20px;background:#b72d2d;box-shadow:0 0 0 0.5px rgba(0,0,0,0.35)"></div>
<div class="a" style="left:309.75px;top:317.75px;width:7.25px;height:21.20px;background:#45c46d;box-shadow:0 0 0 0.5px rgba(0,0,0,0.35)"></div>
<div class="a" style="left:318.00px;top:317.75px;width:8.00px;height:21.20px;background:#3fa9f5;box-shadow:0 0 0 0.5px rgba(0,0,0,0.35)"></div>
<div class="a" style="left:327.00px;top:317.75px;width:7.75px;height:21.20px;background:#b72d2d;box-shadow:0 0 0 0.5px rgba(0,0,0,0.35)"></div>
<div class="t" style="left:386.35px;top:321.48px;font-size:12.6px;line-height:16px;letter-spacing:0.000px;color:#44b862;font-family:'Liberation Sans',sans-serif;transform-origin:0 0;transform:scaleX(0.9127);">0.47</div>
<div class="t" style="left:473.10px;top:321.48px;font-size:12.6px;line-height:16px;letter-spacing:0.000px;color:#ba2f2f;font-family:'Liberation Sans',sans-serif;transform-origin:0 0;transform:scaleX(0.9127);">2.34</div>
<div class="t" style="left:543.35px;top:321.48px;font-size:12.6px;line-height:16px;letter-spacing:0.000px;color:#ba2f2f;font-family:'Liberation Sans',sans-serif;transform-origin:0 0;transform:scaleX(0.9127);">6.64</div>
<div class="t" style="left:633.20px;top:321.48px;font-size:12.6px;line-height:16px;letter-spacing:0.000px;color:#44b862;font-family:'Liberation Sans',sans-serif;transform-origin:0 0;transform:scaleX(0.9127);">1,345</div>
<div class="t" style="left:713.35px;top:321.48px;font-size:12.6px;line-height:16px;letter-spacing:0.000px;color:#44b862;font-family:'Liberation Sans',sans-serif;transform-origin:0 0;transform:scaleX(0.9127);">1.96</div>
<div class="t" style="left:796.85px;top:321.48px;font-size:12.6px;line-height:16px;letter-spacing:0.000px;color:#44b862;font-family:'Liberation Sans',sans-serif;transform-origin:0 0;transform:scaleX(0.9127);">4,116</div>
<div class="t" style="left:869.40px;top:321.48px;font-size:12.6px;line-height:16px;letter-spacing:0.000px;color:#44b862;font-family:'Liberation Sans',sans-serif;transform-origin:0 0;transform:scaleX(0.9127);">056,654</div>
<div class="t" style="left:962.40px;top:321.48px;font-size:12.6px;line-height:16px;letter-spacing:0.000px;color:#d6d6d6;font-family:'Liberation Sans',sans-serif;transform-origin:0 0;transform:scaleX(0.9127);">456,234</div>
<div class="t" style="left:1067.70px;top:321.48px;font-size:12.6px;line-height:16px;letter-spacing:0.000px;color:#d6d6d6;font-family:'Liberation Sans',sans-serif;transform-origin:0 0;transform:scaleX(0.9127);">23</div>
<div class="a" style="left:1089.25px;top:317.75px;width:23.25px;height:21.30px;background:#45c46d;"></div>
<div class="a" style="left:1112.50px;top:317.75px;width:61.75px;height:21.30px;background:#b72d2d;"></div>
<div class="t" style="left:1118.50px;top:321.48px;font-size:12.6px;line-height:16px;letter-spacing:0.000px;color:#f4f4f4;font-family:'Liberation Sans',sans-serif;transform-origin:0 0;transform:scaleX(0.9127);">28%</div>
<div class="t" style="left:1198.50px;top:321.48px;font-size:12.6px;line-height:16px;letter-spacing:0.000px;color:#cfcfcf;font-family:'Liberation Sans',sans-serif;transform-origin:0 0;transform:scaleX(0.9127);">1</div>
<div class="a" style="left:0.00px;top:445.00px;width:1200.00px;height:9.00px;background:#45c46d;"></div>
<div class="a" style="left:0.00px;top:454.00px;width:1200.00px;height:168.00px;background:#1f1f1f;"></div>
<div class="t" style="left:-3.80px;top:463.33px;font-size:12.6px;line-height:16px;letter-spacing:0.000px;color:#d6d6d6;font-family:'Liberation Sans',sans-serif;transform-origin:0 0;transform:scaleX(0.9127);">FO</div>
<div class="t" style="left:69.85px;top:463.33px;font-size:12.6px;line-height:16px;letter-spacing:0.000px;color:#3a9fe6;font-family:'Liberation Sans',sans-serif;transform-origin:0 0;transform:scaleX(0.9127);">1.45</div>
<div class="t" style="left:149.70px;top:463.33px;font-size:12.6px;line-height:16px;letter-spacing:0.000px;color:#3a9fe6;font-family:'Liberation Sans',sans-serif;transform-origin:0 0;transform:scaleX(0.9127);">2,765</div>
<svg class="a" style="left:0;top:0;overflow:visible" width="1" height="1"><path d="M254.9 466 L259.5 471.8 L257.4 471.8 L257.4 476.8 L252.4 476.8 L252.4 471.8 L250.3 471.8 Z" fill="#45c46d"/></svg>
<div class="a" style="left:292.00px;top:459.60px;width:8.00px;height:21.20px;background:#45c46d;box-shadow:0 0 0 0.5px rgba(0,0,0,0.35)"></div>
<div class="a" style="left:301.00px;top:459.60px;width:7.75px;height:21.20px;background:#b72d2d;box-shadow:0 0 0 0.5px rgba(0,0,0,0.35)"></div>
<div class="a" style="left:309.75px;top:459.60px;width:7.25px;height:21.20px;background:#3fa9f5;box-shadow:0 0 0 0.5px rgba(0,0,0,0.35)"></div>
<div class="a" style="left:318.00px;top:459.60px;width:8.00px;height:21.20px;background:#45c46d;box-shadow:0 0 0 0.5px rgba(0,0,0,0.35)"></div>
<div class="a" style="left:327.00px;top:459.60px;width:7.75px;height:21.20px;background:#b72d2d;box-shadow:0 0 0 0.5px rgba(0,0,0,0.35)"></div>
<div class="t" style="left:387.10px;top:463.33px;font-size:12.6px;line-height:16px;letter-spacing:0.000px;color:#44b862;font-family:'Liberation Sans',sans-serif;transform-origin:0 0;transform:scaleX(0.9127);">0.07</div>
<div class="t" style="left:473.85px;top:463.33px;font-size:12.6px;line-height:16px;letter-spacing:0.000px;color:#44b862;font-family:'Liberation Sans',sans-serif;transform-origin:0 0;transform:scaleX(0.9127);">4.45</div>
<div class="t" style="left:544.10px;top:463.33px;font-size:12.6px;line-height:16px;letter-spacing:0.000px;color:#44b862;font-family:'Liberation Sans',sans-serif;transform-origin:0 0;transform:scaleX(0.9127);">1.87</div>
<div class="t" style="left:633.95px;top:463.33px;font-size:12.6px;line-height:16px;letter-spacing:0.000px;color:#44b862;font-family:'Liberation Sans',sans-serif;transform-origin:0 0;transform:scaleX(0.9127);">8,300</div>
<div class="t" style="left:714.10px;top:463.33px;font-size:12.6px;line-height:16px;letter-spacing:0.000px;color:#44b862;font-family:'Liberation Sans',sans-serif;transform-origin:0 0;transform:scaleX(0.9127);">1.98</div>
<div class="t" style="left:797.70px;top:463.33px;font-size:12.6px;line-height:16px;letter-spacing:0.000px;color:#ba2f2f;font-family:'Liberation Sans',sans-serif;transform-origin:0 0;transform:scaleX(0.9127);">2,786</div>
<div class="t" style="left:871.15px;top:463.33px;font-size:12.6px;line-height:16px;letter-spacing:0.000px;color:#ba2f2f;font-family:'Liberation Sans',sans-serif;transform-origin:0 0;transform:scaleX(0.9127);">456,654</div>
<div class="t" style="left:963.90px;top:463.33px;font-size:12.6px;line-height:16px;letter-spacing:0.000px;color:#d6d6d6;font-family:'Liberation Sans',sans-serif;transform-origin:0 0;transform:scaleX(0.9127);">956,654</div>
<div class="t" style="left:1069.70px;top:463.33px;font-size:12.6px;line-height:16px;letter-spacing:0.000px;color:#d6d6d6;font-family:'Liberation Sans',sans-serif;transform-origin:0 0;transform:scaleX(0.9127);">43</div>
<div class="a" style="left:1089.25px;top:459.60px;width:38.75px;height:21.30px;background:#45c46d;"></div>
<div class="a" style="left:1128.00px;top:459.60px;width:46.25px;height:21.30px;background:#b72d2d;"></div>
<div class="t" style="left:1121.25px;top:463.33px;font-size:12.6px;line-height:16px;letter-spacing:0.000px;color:#f4f4f4;font-family:'Liberation Sans',sans-serif;transform-origin:0 0;transform:scaleX(0.9127);">38%</div>
<div class="t" style="left:1198.50px;top:463.33px;font-size:12.6px;line-height:16px;letter-spacing:0.000px;color:#cfcfcf;font-family:'Liberation Sans',sans-serif;transform-origin:0 0;transform:scaleX(0.9127);">1</div>
<div class="t" style="left:-4.40px;top:496.95px;font-size:12.6px;line-height:16px;letter-spacing:0.000px;color:#d6d6d6;font-family:'Liberation Sans',sans-serif;transform-origin:0 0;transform:scaleX(0.9127);">TD</div>
<div class="t" style="left:69.35px;top:496.95px;font-size:12.6px;line-height:16px;letter-spacing:0.000px;color:#3a9fe6;font-family:'Liberation Sans',sans-serif;transform-origin:0 0;transform:scaleX(0.9127);">4.65</div>
<div class="t" style="left:149.20px;top:496.95px;font-size:12.6px;line-height:16px;letter-spacing:0.000px;color:#3a9fe6;font-family:'Liberation Sans',sans-serif;transform-origin:0 0;transform:scaleX(0.9127);">6,565</div>
<svg class="a" style="left:0;top:0;overflow:visible" width="1" height="1"><path d="M254.9 498 L259.5 503.8 L257.4 503.8 L257.4 508.8 L252.4 508.8 L252.4 503.8 L250.3 503.8 Z" fill="#b72d2d"/></svg>
<div class="a" style="left:292.00px;top:493.22px;width:8.00px;height:21.20px;background:#45c46d;box-shadow:0 0 0 0.5px rgba(0,0,0,0.35)"></div>
<div class="a" style="left:301.00px;top:493.22px;width:7.75px;height:21.20px;background:#3fa9f5;box-shadow:0 0 0 0.5px rgba(0,0,0,0.35)"></div>
<div class="a" style="left:309.75px;top:493.22px;width:7.25px;height:21.20px;background:#3fa9f5;box-shadow:0 0 0 0.5px rgba(0,0,0,0.35)"></div>
<div class="a" style="left:318.00px;top:493.22px;width:8.00px;height:21.20px;background:#45c46d;box-shadow:0 0 0 0.5px rgba(0,0,0,0.35)"></div>
<div class="a" style="left:327.00px;top:493.22px;width:7.75px;height:21.20px;background:#b72d2d;box-shadow:0 0 0 0.5px rgba(0,0,0,0.35)"></div>
<div class="t" style="left:386.35px;top:496.95px;font-size:12.6px;line-height:16px;letter-spacing:0.000px;color:#ba2f2f;font-family:'Liberation Sans',sans-serif;transform-origin:0 0;transform:scaleX(0.9127);">0.47</div>
<div class="t" style="left:473.10px;top:496.95px;font-size:12.6px;line-height:16px;letter-spacing:0.000px;color:#ba2f2f;font-family:'Liberation Sans',sans-serif;transform-origin:0 0;transform:scaleX(0.9127);">2.34</div>
<div class="t" style="left:543.35px;top:496.95px;font-size:12.6px;line-height:16px;letter-spacing:0.000px;color:#ba2f2f;font-family:'Liberation Sans',sans-serif;transform-origin:0 0;transform:scaleX(0.9127);">6.64</div>
<div class="t" style="left:633.20px;top:496.95px;font-size:12.6px;line-height:16px;letter-spacing:0.000px;color:#44b862;font-family:'Liberation Sans',sans-serif;transform-origin:0 0;transform:scaleX(0.9127);">1,345</div>
<div class="t" style="left:713.35px;top:496.95px;font-size:12.6px;line-height:16px;letter-spacing:0.000px;color:#44b862;font-family:'Liberation Sans',sans-serif;transform-origin:0 0;transform:scaleX(0.9127);">1.96</div>
<div class="t" style="left:796.85px;top:496.95px;font-size:12.6px;line-height:16px;letter-spacing:0.000px;color:#ba2f2f;font-family:'Liberation Sans',sans-serif;transform-origin:0 0;transform:scaleX(0.9127);">4,116</div>
<div class="t" style="left:869.40px;top:496.95px;font-size:12.6px;line-height:16px;letter-spacing:0.000px;color:#ba2f2f;font-family:'Liberation Sans',sans-serif;transform-origin:0 0;transform:scaleX(0.9127);">056,654</div>
<div class="t" style="left:962.40px;top:496.95px;font-size:12.6px;line-height:16px;letter-spacing:0.000px;color:#d6d6d6;font-family:'Liberation Sans',sans-serif;transform-origin:0 0;transform:scaleX(0.9127);">456,234</div>
<div class="t" style="left:1067.70px;top:496.95px;font-size:12.6px;line-height:16px;letter-spacing:0.000px;color:#d6d6d6;font-family:'Liberation Sans',sans-serif;transform-origin:0 0;transform:scaleX(0.9127);">23</div>
<div class="a" style="left:1089.25px;top:493.22px;width:23.25px;height:21.30px;background:#45c46d;"></div>
<div class="a" style="left:1112.50px;top:493.22px;width:61.75px;height:21.30px;background:#b72d2d;"></div>
<div class="t" style="left:1118.50px;top:496.95px;font-size:12.6px;line-height:16px;letter-spacing:0.000px;color:#f4f4f4;font-family:'Liberation Sans',sans-serif;transform-origin:0 0;transform:scaleX(0.9127);">28%</div>
<div class="t" style="left:1198.50px;top:496.95px;font-size:12.6px;line-height:16px;letter-spacing:0.000px;color:#cfcfcf;font-family:'Liberation Sans',sans-serif;transform-origin:0 0;transform:scaleX(0.9127);">1</div>
<div class="t" style="left:-3.80px;top:530.57px;font-size:12.6px;line-height:16px;letter-spacing:0.000px;color:#d6d6d6;font-family:'Liberation Sans',sans-serif;transform-origin:0 0;transform:scaleX(0.9127);">FO</div>
<div class="t" style="left:69.85px;top:530.57px;font-size:12.6px;line-height:16px;letter-spacing:0.000px;color:#3a9fe6;font-family:'Liberation Sans',sans-serif;transform-origin:0 0;transform:scaleX(0.9127);">1.45</div>
<div class="t" style="left:149.70px;top:530.57px;font-size:12.6px;line-height:16px;letter-spacing:0.000px;color:#3a9fe6;font-family:'Liberation Sans',sans-serif;transform-origin:0 0;transform:scaleX(0.9127);">2,765</div>
<svg class="a" style="left:0;top:0;overflow:visible" width="1" height="1"><path d="M254.9 531.75 L259.5 537.55 L257.4 537.55 L257.4 542.55 L252.4 542.55 L252.4 537.55 L250.3 537.55 Z" fill="#45c46d"/></svg>
<div class="a" style="left:292.00px;top:526.84px;width:8.00px;height:21.20px;background:#45c46d;box-shadow:0 0 0 0.5px rgba(0,0,0,0.35)"></div>
<div class="a" style="left:301.00px;top:526.84px;width:7.75px;height:21.20px;background:#3fa9f5;box-shadow:0 0 0 0.5px rgba(0,0,0,0.35)"></div>
<div class="a" style="left:309.75px;top:526.84px;width:7.25px;height:21.20px;background:#45c46d;box-shadow:0 0 0 0.5px rgba(0,0,0,0.35)"></div>
<div class="a" style="left:318.00px;top:526.84px;width:8.00px;height:21.20px;background:#45c46d;box-shadow:0 0 0 0.5px rgba(0,0,0,0.35)"></div>
<div class="a" style="left:327.00px;top:526.84px;width:7.75px;height:21.20px;background:#45c46d;box-shadow:0 0 0 0.5px rgba(0,0,0,0.35)"></div>
<div class="t" style="left:387.10px;top:530.57px;font-size:12.6px;line-height:16px;letter-spacing:0.000px;color:#44b862;font-family:'Liberation Sans',sans-serif;transform-origin:0 0;transform:scaleX(0.9127);">0.07</div>
<div class="t" style="left:473.85px;top:530.57px;font-size:12.6px;line-height:16px;letter-spacing:0.000px;color:#ba2f2f;font-family:'Liberation Sans',sans-serif;transform-origin:0 0;transform:scaleX(0.9127);">4.45</div>
<div class="t" style="left:544.10px;top:530.57px;font-size:12.6px;line-height:16px;letter-spacing:0.000px;color:#ba2f2f;font-family:'Liberation Sans',sans-serif;transform-origin:0 0;transform:scaleX(0.9127);">1.87</div>
<div class="t" style="left:633.95px;top:530.57px;font-size:12.6px;line-height:16px;letter-spacing:0.000px;color:#44b862;font-family:'Liberation Sans',sans-serif;transform-origin:0 0;transform:scaleX(0.9127);">8,300</div>
<div class="t" style="left:714.10px;top:530.57px;font-size:12.6px;line-height:16px;letter-spacing:0.000px;color:#ba2f2f;font-family:'Liberation Sans',sans-serif;transform-origin:0 0;transform:scaleX(0.9127);">1.98</div>
<div class="t" style="left:797.70px;top:530.57px;font-size:12.6px;line-height:16px;letter-spacing:0.000px;color:#44b862;font-family:'Liberation Sans',sans-serif;transform-origin:0 0;transform:scaleX(0.9127);">2,786</div>
<div class="t" style="left:871.15px;top:530.57px;font-size:12.6px;line-height:16px;letter-spacing:0.000px;color:#44b862;font-family:'Liberation Sans',sans-serif;transform-origin:0 0;transform:scaleX(0.9127);">456,654</div>
<div class="t" style="left:963.90px;top:530.57px;font-size:12.6px;line-height:16px;letter-spacing:0.000px;color:#d6d6d6;font-family:'Liberation Sans',sans-serif;transform-origin:0 0;transform:scaleX(0.9127);">956,654</div>
<div class="t" style="left:1069.70px;top:530.57px;font-size:12.6px;line-height:16px;letter-spacing:0.000px;color:#d6d6d6;font-family:'Liberation Sans',sans-serif;transform-origin:0 0;transform:scaleX(0.9127);">43</div>
<div class="a" style="left:1089.25px;top:526.84px;width:38.75px;height:21.30px;background:#45c46d;"></div>
<div class="a" style="left:1128.00px;top:526.84px;width:46.25px;height:21.30px;background:#b72d2d;"></div>
<div class="t" style="left:1121.25px;top:530.57px;font-size:12.6px;line-height:16px;letter-spacing:0.000px;color:#f4f4f4;font-family:'Liberation Sans',sans-serif;transform-origin:0 0;transform:scaleX(0.9127);">38%</div>
<div class="t" style="left:1198.50px;top:530.57px;font-size:12.6px;line-height:16px;letter-spacing:0.000px;color:#cfcfcf;font-family:'Liberation Sans',sans-serif;transform-origin:0 0;transform:scaleX(0.9127);">1</div>
<div class="t" style="left:-4.40px;top:564.19px;font-size:12.6px;line-height:16px;letter-spacing:0.000px;color:#d6d6d6;font-family:'Liberation Sans',sans-serif;transform-origin:0 0;transform:scaleX(0.9127);">TD</div>
<div class="t" style="left:69.35px;top:564.19px;font-size:12.6px;line-height:16px;letter-spacing:0.000px;color:#3a9fe6;font-family:'Liberation Sans',sans-serif;transform-origin:0 0;transform:scaleX(0.9127);">4.65</div>
<div class="t" style="left:149.20px;top:564.19px;font-size:12.6px;line-height:16px;letter-spacing:0.000px;color:#3a9fe6;font-family:'Liberation Sans',sans-serif;transform-origin:0 0;transform:scaleX(0.9127);">6,565</div>
<div class="a" style="left:249.00px;top:566.00px;width:8.75px;height:2.75px;background:#3fa9f5;"></div>
<div class="a" style="left:249.00px;top:570.75px;width:8.75px;height:2.75px;background:#3fa9f5;"></div>
<div class="a" style="left:292.00px;top:560.46px;width:8.00px;height:21.20px;background:#b72d2d;box-shadow:0 0 0 0.5px rgba(0,0,0,0.35)"></div>
<div class="a" style="left:301.00px;top:560.46px;width:7.75px;height:21.20px;background:#45c46d;box-shadow:0 0 0 0.5px rgba(0,0,0,0.35)"></div>
<div class="a" style="left:309.75px;top:560.46px;width:7.25px;height:21.20px;background:#3fa9f5;box-shadow:0 0 0 0.5px rgba(0,0,0,0.35)"></div>
<div class="a" style="left:318.00px;top:560.46px;width:8.00px;height:21.20px;background:#45c46d;box-shadow:0 0 0 0.5px rgba(0,0,0,0.35)"></div>
<div class="a" style="left:327.00px;top:560.46px;width:7.75px;height:21.20px;background:#b72d2d;box-shadow:0 0 0 0.5px rgba(0,0,0,0.35)"></div>
<div class="t" style="left:386.35px;top:564.19px;font-size:12.6px;line-height:16px;letter-spacing:0.000px;color:#44b862;font-family:'Liberation Sans',sans-serif;transform-origin:0 0;transform:scaleX(0.9127);">0.47</div>
<div class="t" style="left:473.10px;top:564.19px;font-size:12.6px;line-height:16px;letter-spacing:0.000px;color:#44b862;font-family:'Liberation Sans',sans-serif;transform-origin:0 0;transform:scaleX(0.9127);">2.34</div>
<div class="t" style="left:543.35px;top:564.19px;font-size:12.6px;line-height:16px;letter-spacing:0.000px;color:#44b862;font-family:'Liberation Sans',sans-serif;transform-origin:0 0;transform:scaleX(0.9127);">6.64</div>
<div class="t" style="left:633.20px;top:564.19px;font-size:12.6px;line-height:16px;letter-spacing:0.000px;color:#44b862;font-family:'Liberation Sans',sans-serif;transform-origin:0 0;transform:scaleX(0.9127);">1,345</div>
<div class="t" style="left:713.35px;top:564.19px;font-size:12.6px;line-height:16px;letter-spacing:0.000px;color:#44b862;font-family:'Liberation Sans',sans-serif;transform-origin:0 0;transform:scaleX(0.9127);">1.96</div>
<div class="t" style="left:796.85px;top:564.19px;font-size:12.6px;line-height:16px;letter-spacing:0.000px;color:#ba2f2f;font-family:'Liberation Sans',sans-serif;transform-origin:0 0;transform:scaleX(0.9127);">4,116</div>
<div class="t" style="left:869.40px;top:564.19px;font-size:12.6px;line-height:16px;letter-spacing:0.000px;color:#ba2f2f;font-family:'Liberation Sans',sans-serif;transform-origin:0 0;transform:scaleX(0.9127);">056,654</div>
<div class="t" style="left:962.40px;top:564.19px;font-size:12.6px;line-height:16px;letter-spacing:0.000px;color:#d6d6d6;font-family:'Liberation Sans',sans-serif;transform-origin:0 0;transform:scaleX(0.9127);">456,234</div>
<div class="t" style="left:1067.70px;top:564.19px;font-size:12.6px;line-height:16px;letter-spacing:0.000px;color:#d6d6d6;font-family:'Liberation Sans',sans-serif;transform-origin:0 0;transform:scaleX(0.9127);">23</div>
<div class="a" style="left:1089.25px;top:560.46px;width:23.25px;height:21.30px;background:#45c46d;"></div>
<div class="a" style="left:1112.50px;top:560.46px;width:61.75px;height:21.30px;background:#b72d2d;"></div>
<div class="t" style="left:1118.50px;top:564.19px;font-size:12.6px;line-height:16px;letter-spacing:0.000px;color:#f4f4f4;font-family:'Liberation Sans',sans-serif;transform-origin:0 0;transform:scaleX(0.9127);">28%</div>
<div class="t" style="left:1198.50px;top:564.19px;font-size:12.6px;line-height:16px;letter-spacing:0.000px;color:#cfcfcf;font-family:'Liberation Sans',sans-serif;transform-origin:0 0;transform:scaleX(0.9127);">1</div>
<div class="t" style="left:-3.80px;top:597.81px;font-size:12.6px;line-height:16px;letter-spacing:0.000px;color:#d6d6d6;font-family:'Liberation Sans',sans-serif;transform-origin:0 0;transform:scaleX(0.9127);">FO</div>
<div class="t" style="left:69.85px;top:597.81px;font-size:12.6px;line-height:16px;letter-spacing:0.000px;color:#3a9fe6;font-family:'Liberation Sans',sans-serif;transform-origin:0 0;transform:scaleX(0.9127);">1.45</div>
<div class="t" style="left:149.70px;top:597.81px;font-size:12.6px;line-height:16px;letter-spacing:0.000px;color:#3a9fe6;font-family:'Liberation Sans',sans-serif;transform-origin:0 0;transform:scaleX(0.9127);">2,765</div>
<svg class="a" style="left:0;top:0;overflow:visible" width="1" height="1"><path d="M254.9 609.9 L259.5 604.1 L257.4 604.1 L257.4 599 L252.4 599 L252.4 604.1 L250.3 604.1 Z" fill="#b72d2d"/></svg>
<div class="a" style="left:292.00px;top:594.08px;width:8.00px;height:21.20px;background:#45c46d;box-shadow:0 0 0 0.5px rgba(0,0,0,0.35)"></div>
<div class="a" style="left:301.00px;top:594.08px;width:7.75px;height:21.20px;background:#45c46d;box-shadow:0 0 0 0.5px rgba(0,0,0,0.35)"></div>
<div class="a" style="left:309.75px;top:594.08px;width:7.25px;height:21.20px;background:#3fa9f5;box-shadow:0 0 0 0.5px rgba(0,0,0,0.35)"></div>
<div class="a" style="left:318.00px;top:594.08px;width:8.00px;height:21.20px;background:#45c46d;box-shadow:0 0 0 0.5px rgba(0,0,0,0.35)"></div>
<div class="a" style="left:327.00px;top:594.08px;width:7.75px;height:21.20px;background:#3fa9f5;box-shadow:0 0 0 0.5px rgba(0,0,0,0.35)"></div>
<div class="t" style="left:387.10px;top:597.81px;font-size:12.6px;line-height:16px;letter-spacing:0.000px;color:#ba2f2f;font-family:'Liberation Sans',sans-serif;transform-origin:0 0;transform:scaleX(0.9127);">0.07</div>
<div class="t" style="left:473.85px;top:597.81px;font-size:12.6px;line-height:16px;letter-spacing:0.000px;color:#44b862;font-family:'Liberation Sans',sans-serif;transform-origin:0 0;transform:scaleX(0.9127);">4.45</div>
<div class="t" style="left:544.10px;top:597.81px;font-size:12.6px;line-height:16px;letter-spacing:0.000px;color:#44b862;font-family:'Liberation Sans',sans-serif;transform-origin:0 0;transform:scaleX(0.9127);">1.87</div>
<div class="t" style="left:633.95px;top:597.81px;font-size:12.6px;line-height:16px;letter-spacing:0.000px;color:#44b862;font-family:'Liberation Sans',sans-serif;transform-origin:0 0;transform:scaleX(0.9127);">8,300</div>
<div class="t" style="left:714.10px;top:597.81px;font-size:12.6px;line-height:16px;letter-spacing:0.000px;color:#44b862;font-family:'Liberation Sans',sans-serif;transform-origin:0 0;transform:scaleX(0.9127);">1.98</div>
<div class="t" style="left:797.70px;top:597.81px;font-size:12.6px;line-height:16px;letter-spacing:0.000px;color:#ba2f2f;font-family:'Liberation Sans',sans-serif;transform-origin:0 0;transform:scaleX(0.9127);">2,786</div>
<div class="t" style="left:871.15px;top:597.81px;font-size:12.6px;line-height:16px;letter-spacing:0.000px;color:#ba2f2f;font-family:'Liberation Sans',sans-serif;transform-origin:0 0;transform:scaleX(0.9127);">456,654</div>
<div class="t" style="left:963.90px;top:597.81px;font-size:12.6px;line-height:16px;letter-spacing:0.000px;color:#d6d6d6;font-family:'Liberation Sans',sans-serif;transform-origin:0 0;transform:scaleX(0.9127);">956,654</div>
<div class="t" style="left:1069.70px;top:597.81px;font-size:12.6px;line-height:16px;letter-spacing:0.000px;color:#d6d6d6;font-family:'Liberation Sans',sans-serif;transform-origin:0 0;transform:scaleX(0.9127);">43</div>
<div class="a" style="left:1089.25px;top:594.08px;width:38.75px;height:21.30px;background:#45c46d;"></div>
<div class="a" style="left:1128.00px;top:594.08px;width:46.25px;height:21.30px;background:#b72d2d;"></div>
<div class="t" style="left:1121.25px;top:597.81px;font-size:12.6px;line-height:16px;letter-spacing:0.000px;color:#f4f4f4;font-family:'Liberation Sans',sans-serif;transform-origin:0 0;transform:scaleX(0.9127);">38%</div>
<div class="t" style="left:1198.50px;top:597.81px;font-size:12.6px;line-height:16px;letter-spacing:0.000px;color:#cfcfcf;font-family:'Liberation Sans',sans-serif;transform-origin:0 0;transform:scaleX(0.9127);">1</div>
<div class="t" style="left:5.80px;top:351.37px;font-size:37px;line-height:48px;letter-spacing:0.000px;color:#f0f0f0;font-family:'Liberation Sans',sans-serif;transform-origin:0 0;transform:scaleX(0.8932);">34</div>
<div class="a" style="left:-0.50px;top:383.40px;width:3.40px;height:3.70px;background:#f0f0f0;"></div>
<div class="a" style="left:-1.00px;top:398.00px;width:2.50px;height:2.00px;background:#45c46d;"></div>
<div class="t" style="left:8.60px;top:391.15px;font-size:14px;line-height:18px;letter-spacing:-0.475px;color:#f0f0f0;font-family:'Liberation Sans',sans-serif;">4.56%</div>
<div class="t" style="left:-4.40px;top:406.63px;font-size:12.6px;line-height:16px;letter-spacing:0.000px;color:#f0f0f0;font-family:'Liberation Sans',sans-serif;transform-origin:0 0;transform:scaleX(0.9127);">psum Dolor Sit</div>
<div class="a" style="left:93.20px;top:357.90px;width:1.30px;height:63.20px;background:#45c46d;"></div>
<div class="t" style="left:113.70px;top:356.43px;font-size:12.6px;line-height:16px;letter-spacing:0.014px;color:#44b862;font-family:'Liberation Sans',sans-serif;transform-origin:0 0;transform:scaleX(0.9127);">Bid (QTY)</div>
<div class="t" style="left:181.00px;top:356.43px;font-size:12.6px;line-height:16px;letter-spacing:0.000px;color:#44b862;font-family:'Liberation Sans',sans-serif;transform-origin:0 0;transform:scaleX(0.9127);">0.45 (123,457)</div>
<div class="t" style="left:113.70px;top:373.23px;font-size:12.6px;line-height:16px;letter-spacing:-0.011px;color:#ba2f2f;font-family:'Liberation Sans',sans-serif;transform-origin:0 0;transform:scaleX(0.9127);">Offer (QTY)</div>
<div class="t" style="left:180.00px;top:373.23px;font-size:12.6px;line-height:16px;letter-spacing:0.027px;color:#ba2f2f;font-family:'Liberation Sans',sans-serif;transform-origin:0 0;transform:scaleX(0.9127);">0.41 (23,223)</div>
<div class="t" style="left:113.70px;top:390.93px;font-size:12.6px;line-height:16px;letter-spacing:-0.078px;color:#f0f0f0;font-family:'Liberation Sans',sans-serif;transform-origin:0 0;transform:scaleX(0.9127);">Turnover</div>
<div class="t" style="left:178.60px;top:390.93px;font-size:12.6px;line-height:16px;letter-spacing:-0.018px;color:#f0f0f0;font-family:'Liberation Sans',sans-serif;transform-origin:0 0;transform:scaleX(0.9127);">398,345</div>
<div class="t" style="left:113.70px;top:407.63px;font-size:12.6px;line-height:16px;letter-spacing:-0.088px;color:#f0f0f0;font-family:'Liberation Sans',sans-serif;transform-origin:0 0;transform:scaleX(0.9127);">Volume</div>
<div class="t" style="left:177.60px;top:407.63px;font-size:12.6px;line-height:16px;letter-spacing:-0.037px;color:#f0f0f0;font-family:'Liberation Sans',sans-serif;transform-origin:0 0;transform:scaleX(0.9127);">498,890</div>
<div class="t" style="left:336.20px;top:347.13px;font-size:12.6px;line-height:16px;letter-spacing:0.034px;color:#f0f0f0;font-family:'Liberation Sans',sans-serif;transform-origin:0 0;transform:scaleX(0.9127);">Intraday Chart</div>
<div class="a" style="left:290.30px;top:369.20px;width:152.70px;height:54.60px;background:#4a5f51;"></div>
<svg class="a" style="left:0;top:0;overflow:visible" width="1" height="1">
<polygon points="290.3,423.8 290.3,395.5 295.3,395.5 297.8,416.7 300.0,395.5 302.8,395.5 305.3,416.7 306.7,396.7 309.2,416.7 310.8,395.5 314.2,395.5 316.7,372.5 320.0,372.5 322.5,395.5 349.7,395.5 353.3,372.5 356.3,395.5 395.8,395.5 398.8,372.5 402.2,395.5 410.0,395.5 412.8,416.7 414.2,396.7 417.5,418.0 434.4,418.0 434.6,395.5 443.0,395.5 443,423.8" fill="#3f74a0"/>
<polyline points="290.3,395.5 295.3,395.5 297.8,416.7 300.0,395.5 302.8,395.5 305.3,416.7 306.7,396.7 309.2,416.7 310.8,395.5 314.2,395.5 316.7,372.5 320.0,372.5 322.5,395.5 349.7,395.5 353.3,372.5 356.3,395.5 395.8,395.5 398.8,372.5 402.2,395.5 410.0,395.5 412.8,416.7 414.2,396.7 417.5,418.0 434.4,418.0 434.6,395.5 443.0,395.5" fill="none" stroke="#3cbde9" stroke-width="1.3"/>
</svg>
<div class="t" style="left:694.80px;top:347.43px;font-size:12.6px;line-height:16px;letter-spacing:-0.024px;color:#f0f0f0;font-family:'Liberation Sans',sans-serif;transform-origin:0 0;transform:scaleX(0.9127);">Depth View</div>
<div class="a" style="left:496.10px;top:367.20px;width:416.30px;height:54.60px;background:#4a5f51;"></div>
<div class="t" style="left:515.50px;top:370.73px;font-size:12.6px;line-height:16px;letter-spacing:-0.164px;color:#eeeeee;font-family:'Liberation Sans',sans-serif;transform-origin:0 0;transform:scaleX(0.9127);">Bid</div>
<div class="t" style="left:599.60px;top:370.73px;font-size:12.6px;line-height:16px;letter-spacing:-0.037px;color:#eeeeee;font-family:'Liberation Sans',sans-serif;transform-origin:0 0;transform:scaleX(0.9127);">Bid Qty</div>
<div class="t" style="left:724.10px;top:370.73px;font-size:12.6px;line-height:16px;letter-spacing:-0.137px;color:#eeeeee;font-family:'Liberation Sans',sans-serif;transform-origin:0 0;transform:scaleX(0.9127);">Offer</div>
<div class="t" style="left:826.50px;top:370.73px;font-size:12.6px;line-height:16px;letter-spacing:-0.068px;color:#eeeeee;font-family:'Liberation Sans',sans-serif;transform-origin:0 0;transform:scaleX(0.9127);">Offer Qty</div>
<div class="t" style="left:514.10px;top:385.31px;font-size:9.5px;line-height:12px;letter-spacing:0.000px;color:#eeeeee;font-family:'Liberation Sans',sans-serif;">3,23</div>
<div class="t" style="left:613.00px;top:385.31px;font-size:9.5px;line-height:12px;letter-spacing:0.000px;color:#eeeeee;font-family:'Liberation Sans',sans-serif;">2345</div>
<div class="t" style="left:727.70px;top:385.31px;font-size:9.5px;line-height:12px;letter-spacing:0.000px;color:#eeeeee;font-family:'Liberation Sans',sans-serif;">3,22</div>
<div class="t" style="left:845.30px;top:385.31px;font-size:9.5px;line-height:12px;letter-spacing:0.000px;color:#eeeeee;font-family:'Liberation Sans',sans-serif;">23455</div>
<div class="t" style="left:514.10px;top:396.21px;font-size:9.5px;line-height:12px;letter-spacing:0.000px;color:#eeeeee;font-family:'Liberation Sans',sans-serif;">4,23</div>
<div class="t" style="left:613.00px;top:396.21px;font-size:9.5px;line-height:12px;letter-spacing:0.000px;color:#eeeeee;font-family:'Liberation Sans',sans-serif;">2345</div>
<div class="t" style="left:727.70px;top:396.21px;font-size:9.5px;line-height:12px;letter-spacing:0.000px;color:#eeeeee;font-family:'Liberation Sans',sans-serif;">5,55</div>
<div class="t" style="left:845.30px;top:396.21px;font-size:9.5px;line-height:12px;letter-spacing:0.000px;color:#eeeeee;font-family:'Liberation Sans',sans-serif;">26888</div>
<div class="t" style="left:514.10px;top:407.11px;font-size:9.5px;line-height:12px;letter-spacing:0.000px;color:#eeeeee;font-family:'Liberation Sans',sans-serif;">3,23</div>
<div class="t" style="left:613.00px;top:407.11px;font-size:9.5px;line-height:12px;letter-spacing:0.000px;color:#eeeeee;font-family:'Liberation Sans',sans-serif;">2345</div>
<div class="t" style="left:727.70px;top:407.11px;font-size:9.5px;line-height:12px;letter-spacing:0.000px;color:#eeeeee;font-family:'Liberation Sans',sans-serif;">3,22</div>
<div class="t" style="left:847.40px;top:407.11px;font-size:9.5px;line-height:12px;letter-spacing:0.000px;color:#eeeeee;font-family:'Liberation Sans',sans-serif;">21111</div>
<div class="t" style="left:1030.60px;top:347.03px;font-size:12.6px;line-height:16px;letter-spacing:-0.139px;color:#f0f0f0;font-family:'Liberation Sans',sans-serif;transform-origin:0 0;transform:scaleX(0.9127);">Time &amp; Sales</div>
<div class="a" style="left:949.80px;top:367.00px;width:218.20px;height:54.50px;background:#4a5f51;"></div>
<div class="t" style="left:969.80px;top:370.93px;font-size:12.6px;line-height:16px;letter-spacing:-0.292px;color:#eeeeee;font-family:'Liberation Sans',sans-serif;transform-origin:0 0;transform:scaleX(0.9127);">Time</div>
<div class="t" style="left:1084.40px;top:370.93px;font-size:12.6px;line-height:16px;letter-spacing:-0.164px;color:#eeeeee;font-family:'Liberation Sans',sans-serif;transform-origin:0 0;transform:scaleX(0.9127);">Price</div>
<div class="t" style="left:971.60px;top:385.21px;font-size:9.5px;line-height:12px;letter-spacing:0.000px;color:#eeeeee;font-family:'Liberation Sans',sans-serif;">11:23:34</div>
<div class="t" style="left:1092.70px;top:385.21px;font-size:9.5px;line-height:12px;letter-spacing:0.000px;color:#eeeeee;font-family:'Liberation Sans',sans-serif;">3.11</div>
<div class="t" style="left:971.60px;top:397.11px;font-size:9.5px;line-height:12px;letter-spacing:0.000px;color:#eeeeee;font-family:'Liberation Sans',sans-serif;">11:11:34</div>
<div class="t" style="left:1092.00px;top:397.11px;font-size:9.5px;line-height:12px;letter-spacing:0.000px;color:#eeeeee;font-family:'Liberation Sans',sans-serif;">1.23</div>
<div class="t" style="left:971.60px;top:407.71px;font-size:9.5px;line-height:12px;letter-spacing:0.000px;color:#eeeeee;font-family:'Liberation Sans',sans-serif;">11:23:45</div>
<div class="t" style="left:1092.00px;top:407.71px;font-size:9.5px;line-height:12px;letter-spacing:0.000px;color:#eeeeee;font-family:'Liberation Sans',sans-serif;">3.23</div>
<div class="a" style="left:0.00px;top:622.00px;width:1200.00px;height:57.00px;background:#1b1b1b;"></div>
<div class="a" style="left:0.00px;top:679.00px;width:1200.00px;height:3.00px;background:#3d3d3d;"></div>
<div class="a" style="left:0.00px;top:682.00px;width:1200.00px;height:1.00px;background:#171717;"></div>
<div class="a" style="left:0.00px;top:683.00px;width:1200.00px;height:16.00px;background:#212121;"></div>
<div class="a" style="left:0.00px;top:683.00px;width:1200.00px;height:1.00px;background:#2b2b2b;"></div>
<div class="t" style="left:-16.80px;top:682.13px;font-size:12.6px;line-height:16px;letter-spacing:-0.329px;color:#d4d4d4;font-family:'Liberation Sans',sans-serif;transform-origin:0 0;transform:scaleX(0.9127);">onnecting..</div>
<div class="a" style="left:0.00px;top:697.00px;width:53.20px;height:2.00px;background:#2b9a1f;"></div>
<div class="a" style="left:53.20px;top:683.00px;width:0.90px;height:16.00px;background:#131313;"></div>
<div class="a" style="left:0.00px;top:699.00px;width:1200.00px;height:1.00px;background:#3c3c3c;"></div>
</div>
</body></html>
